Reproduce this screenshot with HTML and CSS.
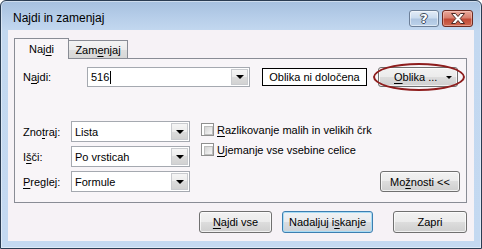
FILE: index.html
```html
<!DOCTYPE html>
<html lang="sl">
<head>
<meta charset="utf-8">
<title>Najdi in zamenjaj</title>
<link rel="stylesheet" href="styles.css">
</head>
<body>
<div class="window">
  <div class="titlebar">
    <span class="title">Najdi in zamenjaj</span>
    <div class="caption-btns">
      <div class="cbtn help"><span class="qmark">?</span></div>
      <div class="cbtn close">
        <svg width="16" height="11" viewBox="0 0 16 11"><path d="M1.5 0.5 H5.5 L8 3.5 L10.5 0.5 H14.5 L10.2 5.5 L14.5 10.5 H10.5 L8 7.5 L5.5 10.5 H1.5 L5.8 5.5 Z" fill="#fff" stroke="#4a2a26" stroke-width="1" stroke-linejoin="round"/></svg>
      </div>
    </div>
  </div>
  <div class="client">
    <div class="tabs">
      <div class="tab active">Naj<u>d</u>i</div>
      <div class="tab">Zam<u>e</u>njaj</div>
    </div>
    <div class="panel">
      <div class="row-find">
        <span class="lbl lbl-find">N<u>a</u>jdi:</span>
        <div class="combo combo-find"><span class="val">516<span class="caret"></span></span><span class="dd"><span class="tri"></span></span></div>
        <div class="fmt-box">Oblika ni določena</div>
        <div class="btn fmt-btn"><span><u>O</u>blika ...</span><span class="tri small"></span></div>
      </div>
      <div class="lower">
        <div class="fields">
          <div class="field"><span class="lbl">Zno<u>t</u>raj:</span><div class="combo"><span class="val">Lista</span><span class="dd"><span class="tri"></span></span></div></div>
          <div class="field"><span class="lbl">I<u>š</u>či:</span><div class="combo"><span class="val">Po vrsticah</span><span class="dd"><span class="tri"></span></span></div></div>
          <div class="field"><span class="lbl"><u>P</u>reglej:</span><div class="combo"><span class="val">Formule</span><span class="dd"><span class="tri"></span></span></div></div>
        </div>
        <div class="checks">
          <div class="check"><span class="box"></span><span><u>R</u>azlikovanje malih in velikih črk</span></div>
          <div class="check"><span class="box"></span><span><u>U</u>jemanje vse vsebine celice</span></div>
        </div>
        <div class="btn opts-btn">Mo<u>ž</u>nosti &lt;&lt;</div>
      </div>
      <div class="ellipse"></div>
    </div>
    <div class="actions">
      <div class="btn act-find-all"><span><u>N</u>ajdi vse</span></div>
      <div class="btn default act-next"><span>Nadaljuj i<u>s</u>kanje</span></div>
      <div class="btn act-close"><span>Zapri</span></div>
    </div>
  </div>
</div>
</body>
</html>
```

FILE: styles.css
```css
* { box-sizing: border-box; }
html, body { margin: 0; padding: 0; }
body {
  width: 482px;
  height: 249px;
  overflow: hidden;
  background: #fff;
  font-family: "Liberation Sans", Arial, sans-serif;
  font-size: 11px;
  color: #000;
}
u { text-decoration: underline; text-underline-offset: 2px; }

.window {
  width: 482px;
  height: 249px;
  border: 1px solid #2a3c52;
  border-radius: 6px 6px 0 0;
  background: linear-gradient(#a6c0df 0px, #b8cfea 18px, #c3d8f0 30px, #c4d9f1 100%);
  box-shadow: inset 0 0 0 1px rgba(255, 255, 255, 0.45);
  display: flex;
  flex-direction: column;
}

.titlebar {
  height: 29px;
  display: flex;
  align-items: flex-start;
  padding: 0 8px 0 12px;
}
.title {
  font-size: 12px;
  margin-top: 10px;
  color: #000;
}
.caption-btns {
  margin-left: auto;
  margin-top: 9px;
  display: flex;
  gap: 3px;
}
.cbtn {
  height: 17px;
  border-radius: 3px;
  display: flex;
  align-items: center;
  justify-content: center;
}
.help {
  width: 30px;
  border: 1px solid #6c7f98;
  background: linear-gradient(#e3ecf7 0%, #cbdcef 45%, #aec5e1 55%, #bcd2ea 100%);
  box-shadow: inset 0 0 0 1px rgba(255, 255, 255, 0.5);
}
.qmark {
  font-family: "DejaVu Sans", sans-serif;
  font-weight: bold;
  font-size: 13px;
  color: #fff;
  line-height: 1;
  text-shadow: 1px 0 0 #3d4a5c, -1px 0 0 #3d4a5c, 0 1px 0 #3d4a5c, 0 -1px 0 #3d4a5c;
}
.close {
  width: 31px;
  border: 1px solid #6d2b22;
  background: linear-gradient(#eaa99c 0%, #d8806f 45%, #c24a36 55%, #cf6a52 100%);
  box-shadow: inset 0 0 0 1px rgba(255, 220, 210, 0.45);
}

.client {
  flex: 1;
  margin: 0 7px 7px 7px;
  background: #f6f2f6;
  padding: 8px 7px 8px 6px;
  display: flex;
  flex-direction: column;
}

.tabs {
  display: flex;
  align-items: flex-end;
  height: 21px;
  margin-bottom: -1px;
}
.tab {
  position: relative;
  border: 1px solid #898c95;
  border-bottom: none;
  display: flex;
  align-items: center;
  justify-content: center;
}
.tab.active {
  z-index: 2;
  width: 55px;
  height: 21px;
  background: #f8f5f8;
  padding-bottom: 1px;
}
.tab:not(.active) {
  z-index: 0;
  width: 60px;
  height: 19px;
  margin-left: -1px;
  background: linear-gradient(#f3f3f3 0%, #ebebeb 50%, #dedede 50%, #d6d6d6 100%);
  padding-bottom: 1px;
}

.panel {
  position: relative;
  z-index: 1;
  height: 145px;
  border: 1px solid #898c95;
  background: #f8f5f8;
  padding: 8px 6px 10px 8px;
  display: flex;
  flex-direction: column;
}

.row-find {
  display: flex;
  align-items: center;
  height: 20px;
}
.lbl { display: block; }
.lbl-find { width: 64px; }

.combo {
  display: flex;
  align-items: stretch;
  background: #fff;
  border: 1px solid #a5a9b0;
  height: 21px;
  width: 119px;
}
.combo-find { width: 163px; height: 20px; }
.combo .val {
  flex: 1;
  display: flex;
  align-items: center;
  padding-left: 3px;
  white-space: nowrap;
}
.caret {
  display: inline-block;
  width: 1px;
  height: 13px;
  background: #000;
  margin-left: 1px;
}
.dd {
  width: 17px;
  margin: 1px;
  border: 1px solid #c9cbcf;
  background: linear-gradient(#f5f5f5 0%, #ececec 50%, #dcdcdc 50%, #d2d2d2 100%);
  display: flex;
  align-items: center;
  justify-content: center;
}
.tri {
  width: 0;
  height: 0;
  border-left: 4px solid transparent;
  border-right: 4px solid transparent;
  border-top: 4px solid #000;
}
.tri.small {
  border-left-width: 3px;
  border-right-width: 3px;
  border-top-width: 3px;
}

.fmt-box {
  margin-left: 12px;
  width: 105px;
  height: 18px;
  border: 1px solid #000;
  background: #fff;
  display: flex;
  align-items: center;
  justify-content: center;
}

.btn {
  border: 1px solid #707070;
  border-radius: 3px;
  background: linear-gradient(#f2f2f2 0%, #ebebeb 50%, #dddddd 50%, #cfcfcf 100%);
  box-shadow: inset 0 0 0 1px rgba(255, 255, 255, 0.7);
  display: flex;
  align-items: center;
  justify-content: center;
  white-space: nowrap;
}
.fmt-btn {
  margin-left: 11px;
  width: 80px;
  height: 20px;
  justify-content: flex-start;
  padding: 0 5px 0 15px;
}
.fmt-btn .tri { margin-left: auto; }

.lower {
  display: flex;
  margin-top: 34px;
}
.fields {
  display: flex;
  flex-direction: column;
  gap: 4px;
}
.field {
  display: flex;
  align-items: center;
}
.field .lbl { width: 48px; }

.checks {
  margin-left: 11px;
  padding-top: 2px;
  display: flex;
  flex-direction: column;
  gap: 7px;
}
.check {
  display: flex;
  align-items: center;
  gap: 3px;
  height: 13px;
}
.box {
  width: 13px;
  height: 13px;
  border: 1px solid #8f8f8f;
  background: #fff;
  padding: 2px;
  display: block;
  position: relative;
}
.box::after {
  content: "";
  display: block;
  width: 7px;
  height: 7px;
  border: 1px solid #bdbdbd;
  background: linear-gradient(135deg, #d4d4d4, #f7f7f7);
}

.opts-btn {
  margin-left: auto;
  align-self: flex-end;
  width: 80px;
  height: 21px;
}

.ellipse {
  position: absolute;
  left: 358px;
  top: 4px;
  width: 92px;
  height: 28px;
  border: 2px solid #8e1d1d;
  border-radius: 50%;
}

.actions {
  display: flex;
  justify-content: flex-end;
  margin-top: 8px;
  height: 22px;
}
.act-find-all { width: 73px; }
.act-next { width: 91px; margin-left: 10px; }
.act-close { width: 74px; margin-left: 20px; }
.btn.default {
  border-color: #3c7fb1;
  box-shadow: inset 0 0 0 1px #a8dcf5;
  background: linear-gradient(#f0f2f4 0%, #e8ebee 50%, #d9dde1 50%, #ccd1d6 100%);
}
```
